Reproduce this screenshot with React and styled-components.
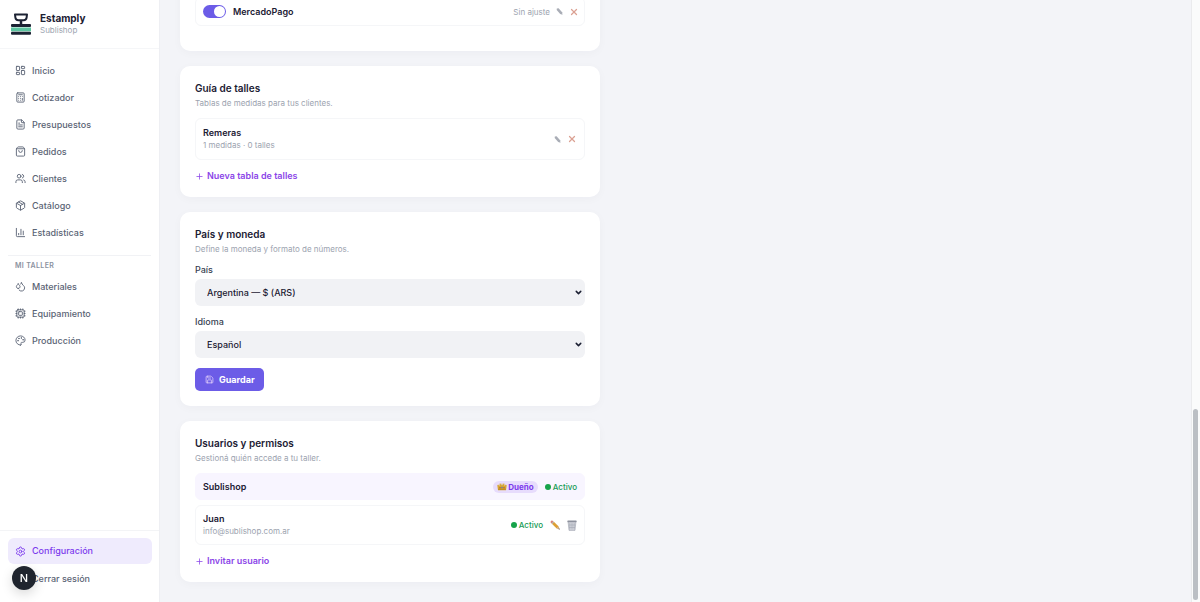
import React from "react";
import styled, { createGlobalStyle } from "styled-components";
import {
  Calculator,
  ChartColumn,
  ChevronDown,
  Cpu,
  Droplets,
  FileText,
  LayoutDashboard,
  Package,
  Palette,
  Plus,
  Save,
  Settings,
  ShoppingBag,
  Users,
  X,
} from "lucide-react";

const mainLinks = [
  { label: "Inicio", icon: LayoutDashboard },
  { label: "Cotizador", icon: Calculator },
  { label: "Presupuestos", icon: FileText },
  { label: "Pedidos", icon: ShoppingBag },
  { label: "Clientes", icon: Users },
  { label: "Catálogo", icon: Package },
  { label: "Estadísticas", icon: ChartColumn },
];

const shopLinks = [
  { label: "Materiales", icon: Droplets },
  { label: "Equipamiento", icon: Cpu },
  { label: "Producción", icon: Palette },
];

const Logo = () => (
  <svg width="22" height="23" viewBox="0 0 22 23" fill="none" aria-hidden="true">
    <path d="M5 1.500h12l-.4 3.200a3 3 0 0 1-3 2.600H8.400a3 3 0 0 1-3-2.600z" stroke="#1c2233" strokeWidth="2" strokeLinejoin="round" />
    <path d="M11 7v4" stroke="#1c2233" strokeWidth="2.500" />
    <rect x="1" y="11" width="20" height="3" rx="1" fill="#1c2233" />
    <rect x="1" y="14.500" width="20" height="3.800" fill="#5cc4a0" />
    <rect x="1" y="18.800" width="20" height="3" rx="1" fill="#1c2233" />
  </svg>
);

const Nib = () => (
  <svg width="7" height="7" viewBox="0 0 7 7" aria-hidden="true">
    <path d="M.8.500 2.600.200 6.100 4.300 6.500 6.700 4.200 6 .7 1.900z" fill="#a9adb6" />
  </svg>
);

const Crown = () => (
  <svg width="10" height="9" viewBox="0 0 10 9" aria-hidden="true">
    <path d="M.3 3.200 1.200 2.400 2.400 4 2.700 1.500 3.600 1.500 4.200 3.400 5 .900 5.800 3.400 6.400 1.500 7.300 1.500 7.600 4 8.800 2.400 9.700 3.200 9 8.300H1z" fill="#d6a733" />
    <path d="M1.200 7.200h7.600" stroke="#b58324" strokeWidth="1" />
    <circle cx="5" cy="5.500" r=".8" fill="#5a7dbd" />
    <circle cx="3" cy="5.700" r=".6" fill="#b7472a" />
    <circle cx="7" cy="5.700" r=".6" fill="#b7472a" />
  </svg>
);

const PencilColor = () => (
  <svg width="10" height="10" viewBox="0 0 10 10" aria-hidden="true">
    <path d="M.3 1.900 1.900.300 3.400 1.500 1.500 3.400z" fill="#d98078" />
    <path d="M1.500 3.400 3.400 1.500 4.100 2.100 2.100 4.100z" fill="#8b919c" />
    <path d="M2.100 4.100 4.100 2.100 8.700 6.500 6.700 8.500z" fill="#dd9f35" />
    <path d="M6.700 8.500 8.700 6.500 9.700 9.600z" fill="#c9a27a" />
    <path d="M8.600 9.300 9.400 8.500 9.700 9.600z" fill="#333" />
  </svg>
);

const TrashColor = () => (
  <svg width="10" height="11" viewBox="0 0 10 11" aria-hidden="true">
    <path d="M1.100 2h7.800L8 10.400H2z" fill="#d3d5dc" />
    <path d="M2.800 3v6.500M5 3v6.500M7.200 3v6.500M1.800 5h6.400M2 7.500h6" stroke="#a3a7b3" strokeWidth=".6" />
    <path d="M1.100 2 2 10.400h6L8.900 2" fill="none" stroke="#9ea2ae" strokeWidth=".6" />
    <rect x=".3" y=".6" width="9.400" height="1.700" rx=".7" fill="#8d919d" />
  </svg>
);

const NavLink = ({ item, active }) => {
  const Icon = item.icon;
  return (
    <NavItem href="#" $active={active}>
      <Icon size={11} strokeWidth={2} />
      {item.label}
    </NavItem>
  );
};

const SelectField = ({ id, label, option }) => (
  <Field>
    <label htmlFor={id}>{label}</label>
    <SelectBox>
      <select id={id}>
        <option>{option}</option>
      </select>
      <ChevronDown size={9} strokeWidth={4} />
    </SelectBox>
  </Field>
);

const App = () => {
  return (
    <>
      <GlobalStyle />
      <Layout>
        <Sidebar>
          <Brand>
            <Logo />
            <div>
              <BrandName>Estamply</BrandName>
              <BrandShop>Sublishop</BrandShop>
            </div>
          </Brand>
          <Nav>
            {mainLinks.map((item) => (
              <NavLink key={item.label} item={item} />
            ))}
            <NavGroup>Mi taller</NavGroup>
            {shopLinks.map((item) => (
              <NavLink key={item.label} item={item} />
            ))}
          </Nav>
          <SidebarFooter>
            <NavLink item={{ label: "Configuración", icon: Settings }} active />
            <Logout type="button">Cerrar sesión</Logout>
          </SidebarFooter>
        </Sidebar>

        <Main>
          <Card $roomy>
            <Row $compact>
              <Switch>
                <input type="checkbox" id="mercadopago" defaultChecked />
                <label htmlFor="mercadopago">MercadoPago</label>
              </Switch>
              <Actions>
                <Muted>Sin ajuste</Muted>
                <IconButton type="button" aria-label="Editar">
                  <Nib />
                </IconButton>
                <IconButton type="button" aria-label="Eliminar">
                  <X size={10} strokeWidth={3} />
                </IconButton>
              </Actions>
            </Row>
          </Card>

          <Card>
            <h2>Guía de talles</h2>
            <Hint>Tablas de medidas para tus clientes.</Hint>
            <Row $height="42px">
              <div>
                <Name>Remeras</Name>
                <Muted>1 medidas · 0 talles</Muted>
              </div>
              <Actions>
                <IconButton type="button" aria-label="Editar">
                  <Nib />
                </IconButton>
                <IconButton type="button" aria-label="Eliminar">
                  <X size={10} strokeWidth={3} />
                </IconButton>
              </Actions>
            </Row>
            <AddButton type="button">
              <Plus size={9} />
              Nueva tabla de talles
            </AddButton>
          </Card>

          <Card>
            <h2>País y moneda</h2>
            <Hint>Define la moneda y formato de números.</Hint>
            <SelectField id="country" label="País" option="Argentina — $ (ARS)" />
            <SelectField id="language" label="Idioma" option="Español" />
            <SaveButton type="button">
              <Save size={9} />
              Guardar
            </SaveButton>
          </Card>

          <Card>
            <h2>Usuarios y permisos</h2>
            <Hint>Gestioná quién accede a tu taller.</Hint>
            <Row $owner $height="27px">
              <Name>Sublishop</Name>
              <Actions $wide>
                <Badge>
                  <Crown />
                  Dueño
                </Badge>
                <Status>Activo</Status>
              </Actions>
            </Row>
            <Row $height="40px">
              <div>
                <Name>Juan</Name>
                <Muted>info@sublishop.com.ar</Muted>
              </div>
              <Actions $wide>
                <Status>Activo</Status>
                <IconButton type="button" aria-label="Editar usuario">
                  <PencilColor />
                </IconButton>
                <IconButton type="button" aria-label="Eliminar usuario">
                  <TrashColor />
                </IconButton>
              </Actions>
            </Row>
            <AddButton type="button">
              <Plus size={9} />
              Invitar usuario
            </AddButton>
          </Card>
        </Main>

        <ScrollTrack aria-hidden="true">
          <ScrollThumb />
        </ScrollTrack>
        <DevBadge type="button">N</DevBadge>
      </Layout>
    </>
  );
};

export default App;

const GlobalStyle = createGlobalStyle`
  * {
    box-sizing: border-box;
  }

  body {
    margin: 0;
    background-color: #f3f4f8;
    color: #1c2033;
    font-family: Inter, "Liberation Sans", sans-serif;
    font-size: 9px;
    line-height: 12px;
  }

  h2,
  p {
    margin: 0;
  }

  button,
  select,
  input {
    font-family: inherit;
    font-size: inherit;
    line-height: inherit;
  }

  button {
    border: none;
    padding: 0;
    background: none;
    cursor: pointer;
  }

  svg {
    flex-shrink: 0;
  }
`;

const Layout = styled.div`
  display: flex;
  height: 100vh;
  overflow: hidden;
`;

const Sidebar = styled.aside`
  display: flex;
  flex-direction: column;
  flex-shrink: 0;
  width: 160px;
  background-color: white;
  border-right: 1px solid #eeeff3;
`;

const Brand = styled.div`
  display: flex;
  align-items: center;
  gap: 8px;
  height: 49px;
  padding: 0 10px;
  border-bottom: 1px solid #f5f6f8;
`;

const BrandName = styled.div`
  font-size: 10px;
  font-weight: 700;
`;

const BrandShop = styled.div`
  color: #9ca3af;
  font-size: 8px;
`;

const Nav = styled.nav`
  display: flex;
  flex-direction: column;
  gap: 2px;
  flex: 1;
  padding: 9px 8px;
`;

const NavItem = styled.a`
  display: flex;
  align-items: center;
  gap: 6px;
  height: ${({ $active }) => ($active ? "26px" : "25px")};
  padding: 0 7px;
  border-radius: 6px;
  background-color: ${({ $active }) => ($active ? "#efebfd" : "transparent")};
  color: ${({ $active }) => ($active ? "#7c3aed" : "#5b6475")};
  font-weight: 500;
  text-decoration: none;
`;

const NavGroup = styled.div`
  margin-top: 8px;
  padding: 5px 7px 1px;
  border-top: 1px solid #f1f2f5;
  color: #8b92a0;
  font-size: 7px;
  font-weight: 600;
  line-height: 10px;
  letter-spacing: 0.05em;
  text-transform: uppercase;
`;

const SidebarFooter = styled.div`
  display: flex;
  flex-direction: column;
  gap: 2px;
  padding: 7px 7px 10px 8px;
  border-top: 1px solid #f3f4f6;
`;

const Logout = styled.button`
  height: 26px;
  padding-left: 24px;
  color: #5b6475;
  font-weight: 500;
  text-align: left;
`;

const Main = styled.main`
  display: flex;
  flex: 1;
  flex-direction: column;
  justify-content: flex-end;
  gap: 15px;
  min-width: 0;
  padding: 0 20px 20px;
`;

const Card = styled.section`
  flex-shrink: 0;
  width: 100%;
  max-width: 420px;
  padding: ${({ $roomy }) => ($roomy ? "15px 15px 25px" : "15px")};
  border-radius: 10px;
  background-color: white;
  box-shadow: 0 2px 10px rgba(30, 30, 60, 0.03);

  h2 {
    font-size: 10px;
    font-weight: 600;
    line-height: 15px;
  }
`;

const Hint = styled.p`
  margin-bottom: 8px;
  color: #9ca3af;
  font-size: 8px;
  line-height: 14px;
`;

const Row = styled.div`
  display: flex;
  align-items: center;
  justify-content: space-between;
  min-height: ${({ $height }) => $height || "29px"};
  margin-bottom: ${({ $owner }) => ($owner ? "5px" : "0")};
  padding: ${({ $compact }) => ($compact ? "0 5px 0 7px" : "0 7px")};
  border: 1px solid ${({ $owner }) => ($owner ? "#f8f5ff" : "#f5f6f8")};
  border-radius: 6px;
  background-color: ${({ $owner }) => ($owner ? "#f8f5ff" : "white")};
`;

const Name = styled.div`
  font-weight: 600;
`;

const Muted = styled.div`
  color: #9ca3af;
  font-size: 8px;
`;

const Actions = styled.div`
  display: flex;
  align-items: center;
  gap: ${({ $wide }) => ($wide ? "7px" : "6px")};
`;

const IconButton = styled.button`
  display: flex;
  color: #dba193;
`;

const Switch = styled.div`
  display: flex;
  align-items: center;
  gap: 7px;
  font-weight: 600;

  input {
    display: flex;
    justify-content: flex-end;
    width: 23px;
    height: 13px;
    margin: 0;
    padding: 1px;
    border-radius: 7px;
    background-color: #6c5ce7;
    appearance: none;
  }

  input::after {
    width: 11px;
    height: 11px;
    border-radius: 50%;
    background-color: white;
    content: "";
  }

  input:not(:checked) {
    justify-content: flex-start;
    background-color: #d1d5db;
  }
`;

const AddButton = styled.button`
  display: flex;
  align-items: center;
  gap: 3px;
  margin-top: 10px;
  color: #8b45e8;
  font-weight: 600;
`;

const Field = styled.div`
  display: flex;
  flex-direction: column;
  gap: 3px;
  margin-bottom: 10px;

  label {
    color: #374151;
    font-weight: 500;
  }
`;

const SelectBox = styled.div`
  display: grid;
  align-items: center;

  select,
  svg {
    grid-area: 1 / 1;
  }

  select {
    height: 27px;
    padding: 0 12px;
    border: none;
    border-radius: 6px;
    background-color: #f1f2f5;
    color: #1c2033;
    font-weight: 500;
    appearance: none;
  }

  svg {
    justify-self: end;
    margin-right: 2px;
    pointer-events: none;
  }
`;

const SaveButton = styled.button`
  display: flex;
  align-items: center;
  gap: 5px;
  height: 23px;
  padding: 0 9px 0 10px;
  border-radius: 5px;
  background-color: #6c5ce7;
  color: white;
  font-weight: 700;

  svg {
    color: #e6d3fb;
  }
`;

const Badge = styled.span`
  display: flex;
  align-items: center;
  gap: 1px;
  padding: 0 4px;
  border-radius: 7px;
  background-color: #e7dcfc;
  color: #7c3aed;
  font-size: 8px;
  font-weight: 700;
`;

const Status = styled.span`
  display: flex;
  align-items: center;
  gap: 2px;
  color: #169c55;
  font-size: 8px;
  font-weight: 500;

  &::before {
    width: 6px;
    height: 6px;
    border-radius: 50%;
    background-color: #16a34a;
    content: "";
  }
`;

const ScrollTrack = styled.div`
  display: flex;
  flex-direction: column;
  justify-content: flex-end;
  width: 9px;
  padding: 2px 2px 2px 1px;
  border-left: 1px solid #eaebed;
  background-color: #fafbfb;
`;

const ScrollThumb = styled.div`
  height: 32%;
  border-radius: 3px;
  background-color: #bbbfc4;
`;

// floats over the logout button
const DevBadge = styled.button`
  position: fixed;
  bottom: 12px;
  left: 12px;
  width: 24px;
  height: 24px;
  border-radius: 50%;
  background-color: #1f242e;
  box-shadow: 0 4px 12px rgba(0, 0, 0, 0.15);
  color: white;
  font-size: 11px;
  font-weight: 500;
`;
